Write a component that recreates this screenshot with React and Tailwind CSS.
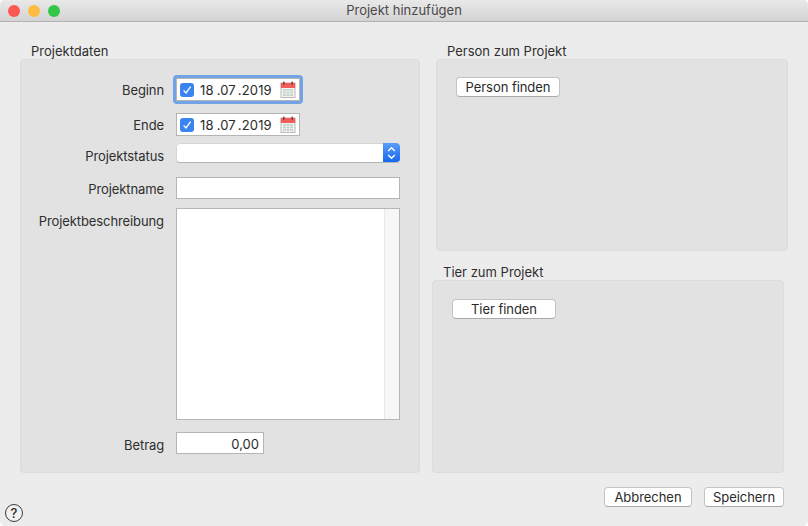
const Calendar = () => (
  <svg width="16" height="17" viewBox="0 0 16 17" className="shrink-0">
    <rect x="1" y="2" width="14" height="14.5" fill="#f4f4f0" stroke="#a9a9a4" strokeWidth="0.8" />
    <rect x="0.8" y="2" width="14.4" height="5" rx="0.8" fill="#ee5f5b" />
    <rect x="3" y="0.5" width="1.6" height="3.5" rx="0.8" fill="#8f3a38" />
    <rect x="11.4" y="0.5" width="1.6" height="3.5" rx="0.8" fill="#8f3a38" />
    <rect x="3" y="8" width="10" height="7" fill="#c3d4cc" />
    <path d="M3 10.3h10M3 12.7h10M6.3 8v7M9.7 8v7" stroke="#f4f4f0" strokeWidth="0.7" />
  </svg>
);

const DateField = ({ focused }) => (
  <div className={focused ? 'w-[130px] h-[29px] rounded-[4px] bg-[#74a2e6] p-[3px] -ml-[3px]' : 'w-[124px] h-[23px]'}>
    <div className="h-full flex items-center bg-white border border-[#b5b5b5] pl-[3px] pr-[3px]">
      <div className="w-[14px] h-[14px] rounded-[3px] bg-[#3b83f0] flex items-center justify-center shrink-0">
        <svg width="10" height="10" viewBox="0 0 10 10">
          <path d="M1.6 5.4 L4 8 L8.6 1.6" fill="none" stroke="#fff" strokeWidth="1.3" />
        </svg>
      </div>
      <span className="ml-[6px] pt-[2px] text-[13px] tracking-[0.15px] text-[#2a2a2a] flex-1 whitespace-nowrap">
        18<span className="ml-[3px]">.07</span><span className="ml-[2px]">.2019</span>
      </span>
      <Calendar />
    </div>
  </div>
);

const Row = ({ label, children, className }) => (
  <div className={`flex ${className}`}>
    <div className="w-[143px] text-right text-[13px] tracking-[-0.1px] text-[#2e2e2e] leading-[16px] pt-[4px] whitespace-nowrap">{label}</div>
    <div className="ml-[12px]">{children}</div>
  </div>
);

const MacButton = ({ children, className }) => (
  <button className={`h-[20px] bg-white border border-[#c4c4c4] border-b-[#aaaaaa] rounded-[4px] text-[13px] tracking-[-0.05px] leading-[17px] text-[#2a2a2a] ${className}`}>
    {children}
  </button>
);

const GroupLabel = ({ children, className }) => (
  <div className={`text-[13px] leading-[16px] text-[#2e2e2e] whitespace-nowrap ${className}`}>{children}</div>
);

export default function App() {
  return (
    <div className="w-[808px] h-[526px] bg-white overflow-hidden" style={{ fontFamily: '"Inter", "Liberation Sans", sans-serif' }}>
      <div className="h-full flex flex-col bg-[#ececec] rounded-[5px] overflow-hidden">
        {/* Titlebar */}
        <div className="h-[22px] shrink-0 flex items-center relative bg-gradient-to-b from-[#e9e9e9] to-[#d3d3d3] border-b border-[#b2b2b2]">
          <div className="flex gap-[8px] pl-[8px]">
            <div className="w-[12px] h-[12px] rounded-full bg-[#fc5753]" />
            <div className="w-[12px] h-[12px] rounded-full bg-[#fdbc40]" />
            <div className="w-[12px] h-[12px] rounded-full bg-[#33c748]" />
          </div>
          <div className="flex-1 text-center text-[13px] text-[#4a4a4a] pr-[60px]">Projekt hinzufügen</div>
        </div>

        {/* Content */}
        <div className="flex flex-1 min-h-0 pt-[21px]">
          {/* Projektdaten */}
          <div className="w-[400px] ml-[20px] mr-[12px] shrink-0 flex flex-col">
            <GroupLabel className="ml-[11px]">Projektdaten</GroupLabel>
            <div className="h-[414px] bg-[#e2e2e2] border border-[#dcdcdc] rounded-[4px] pt-[15px]">
              <Row label={<span className="block pt-[3px]">Beginn</span>} className="h-[29px] items-start">
                <DateField focused />
              </Row>
              <Row label="Ende" className="mt-[9px]">
                <DateField />
              </Row>
              <Row label={<span className="block pt-[1px]">Projektstatus</span>} className="mt-[7px] h-[20px]">
                <div className="w-[224px] h-[20px] flex bg-white rounded-[4px] border-b border-[#b5b5b5] overflow-hidden">
                  <div className="flex-1 border-l border-t border-[#d4d4d4] rounded-l-[4px]" />
                  <div className="w-[17px] bg-gradient-to-b from-[#5a9cf8] to-[#1567f0] flex items-center justify-center">
                    <svg width="9" height="14" viewBox="0 0 9 14">
                      <path d="M1.2 5 L4.5 1.8 L7.8 5 M1.2 9 L4.5 12.2 L7.8 9" fill="none" stroke="#fff" strokeWidth="1.4" />
                    </svg>
                  </div>
                </div>
              </Row>
              <Row label="Projektname" className="mt-[14px]">
                <div className="w-[224px] h-[22px] bg-white border border-[#b5b5b5]" />
              </Row>
              <Row label={<span className="block pt-[1px]">Projektbeschreibung</span>} className="mt-[9px]">
                <div className="w-[224px] h-[212px] bg-white border border-[#b5b5b5] flex justify-end">
                  <div className="w-[15px] bg-[#f7f7f7] border-l border-[#e8e8e8]" />
                </div>
              </Row>
              <Row label={<span className="block pt-[1px]">Betrag</span>} className="mt-[12px]">
                <div className="w-[88px] h-[22px] bg-white border border-[#b5b5b5] text-right text-[13px] leading-[22px] pr-[4px] text-[#2a2a2a]">0,00</div>
              </Row>
            </div>
          </div>

          {/* Right column */}
          <div className="w-[356px] shrink-0 flex flex-col">
            <GroupLabel className="ml-[15px]">Person zum Projekt</GroupLabel>
            <div className="w-[352px] h-[193px] ml-[4px] bg-[#e2e2e2] border border-[#dcdcdc] rounded-[4px] pt-[17px] pl-[19px]">
              <MacButton className="w-[104px] block">Person finden</MacButton>
            </div>
            <GroupLabel className="ml-[11px] mt-[13px]">Tier zum Projekt</GroupLabel>
            <div className="w-[352px] h-[194px] bg-[#e2e2e2] border border-[#dcdcdc] rounded-[4px] pt-[18px] pl-[19px]">
              <MacButton className="w-[104px] block">Tier finden</MacButton>
            </div>
          </div>
        </div>

        {/* Footer */}
        <div className="h-[53px] shrink-0 flex justify-between pl-[5px] pr-[24px]">
          <div className="self-end mb-[4px] w-[18px] h-[18px] rounded-full border border-[#3a3a3a] text-[13px] font-medium leading-[16px] text-center text-[#2a2a2a] bg-[#f2f2f2]">?</div>
          <div className="flex gap-[12px] mt-[14px]">
            <MacButton className="w-[88px]">Abbrechen</MacButton>
            <MacButton className="w-[80px]">Speichern</MacButton>
          </div>
        </div>
      </div>
    </div>
  );
}
